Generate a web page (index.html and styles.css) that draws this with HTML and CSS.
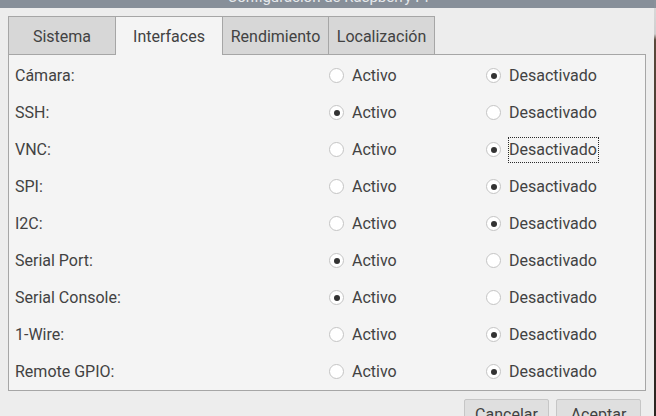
FILE: index.html
```html
<!DOCTYPE html>
<html lang="es">
<head>
<meta charset="utf-8">
<title>Configuración de Raspberry Pi</title>
<link rel="stylesheet" href="styles.css">
</head>
<body>
<div class="screen">
  <div class="window">
    <div class="titlebar"><span class="title-text">Configuración de Raspberry Pi</span></div>
    <div class="content">
      <div class="tabs">
        <div class="tab">Sistema</div>
        <div class="tab active">Interfaces</div>
        <div class="tab">Rendimiento</div>
        <div class="tab last">Localización</div>
      </div>
      <div class="panel">
        <div class="row">
          <span class="label">Cámara:</span>
          <span class="opt"><span class="radio"></span><span class="opt-text">Activo</span></span>
          <span class="opt"><span class="radio on"></span><span class="opt-text">Desactivado</span></span>
        </div>
        <div class="row">
          <span class="label">SSH:</span>
          <span class="opt"><span class="radio on"></span><span class="opt-text">Activo</span></span>
          <span class="opt"><span class="radio"></span><span class="opt-text">Desactivado</span></span>
        </div>
        <div class="row">
          <span class="label">VNC:</span>
          <span class="opt"><span class="radio"></span><span class="opt-text">Activo</span></span>
          <span class="opt"><span class="radio on"></span><span class="opt-text focus">Desactivado</span></span>
        </div>
        <div class="row">
          <span class="label">SPI:</span>
          <span class="opt"><span class="radio"></span><span class="opt-text">Activo</span></span>
          <span class="opt"><span class="radio on"></span><span class="opt-text">Desactivado</span></span>
        </div>
        <div class="row">
          <span class="label">I2C:</span>
          <span class="opt"><span class="radio"></span><span class="opt-text">Activo</span></span>
          <span class="opt"><span class="radio on"></span><span class="opt-text">Desactivado</span></span>
        </div>
        <div class="row">
          <span class="label">Serial Port:</span>
          <span class="opt"><span class="radio on"></span><span class="opt-text">Activo</span></span>
          <span class="opt"><span class="radio"></span><span class="opt-text">Desactivado</span></span>
        </div>
        <div class="row">
          <span class="label">Serial Console:</span>
          <span class="opt"><span class="radio on"></span><span class="opt-text">Activo</span></span>
          <span class="opt"><span class="radio"></span><span class="opt-text">Desactivado</span></span>
        </div>
        <div class="row">
          <span class="label">1-Wire:</span>
          <span class="opt"><span class="radio"></span><span class="opt-text">Activo</span></span>
          <span class="opt"><span class="radio on"></span><span class="opt-text">Desactivado</span></span>
        </div>
        <div class="row">
          <span class="label">Remote GPIO:</span>
          <span class="opt"><span class="radio"></span><span class="opt-text">Activo</span></span>
          <span class="opt"><span class="radio on"></span><span class="opt-text">Desactivado</span></span>
        </div>
      </div>
      <div class="buttons">
        <div class="btn">Cancelar</div>
        <div class="btn">Aceptar</div>
      </div>
    </div>
  </div>
  <div class="desk-edge"></div>
</div>
</body>
</html>
```
FILE: styles.css
```css
html, body {
  margin: 0;
  padding: 0;
}
body {
  width: 656px;
  height: 416px;
  overflow: hidden;
  font-family: Roboto, "Liberation Sans", sans-serif;
  font-size: 16px;
  color: #424242;
  background: #ededed;
}
.screen {
  display: flex;
  width: 656px;
  height: 416px;
}
.window {
  width: 654px;
  height: 416px;
  background: #ededed;
  overflow: hidden;
}
.desk-edge {
  width: 2px;
  height: 416px;
  background: linear-gradient(to bottom, #8a929b 0, #8a929b 8px, #d8d8d8 8px, #cfcfcf 34px, #5a4a3c 40px, #3a3028 200px, #2c2622 416px);
}
.titlebar {
  height: 8px;
  background: #878f99;
  overflow: hidden;
  text-align: center;
  padding-left: 2px;
}
.title-text {
  display: inline-block;
  color: #e6e9ec;
  font-size: 15px;
  line-height: 15px;
  margin-top: -10px;
  vertical-align: top;
}
.content {
  padding: 8px 0 0 8px;
}
.tabs {
  display: flex;
  height: 38px;
  align-items: flex-start;
}
.tab {
  box-sizing: border-box;
  height: 38px;
  width: 107px;
  background: #d7d7d7;
  border-top: 1px solid #a6a6a6;
  border-left: 1px solid #a6a6a6;
  display: flex;
  align-items: center;
  justify-content: center;
  padding-top: 2px;
  position: relative;
  z-index: 1;
}
.tab.active {
  background: #f4f4f4;
  height: 39px;
  padding-bottom: 1px;
}
.tab:nth-child(3) {
  width: 106px;
}
.tab.last {
  width: 107px;
  border-right: 1px solid #a6a6a6;
}
.panel {
  box-sizing: border-box;
  width: 638px;
  height: 337px;
  background: #f4f4f4;
  border: 1px solid #a6a6a6;
  padding: 2px 0 0 6px;
}
.row {
  display: grid;
  grid-template-columns: 314px 157px 1fr;
  height: 37px;
  align-items: center;
}
.label {
  white-space: nowrap;
}
.opt {
  display: flex;
  align-items: center;
  gap: 7px;
}
.radio {
  box-sizing: border-box;
  width: 15px;
  height: 15px;
  border-radius: 50%;
  border: 1px solid #c4c4c4;
  background: #ffffff;
  display: flex;
  align-items: center;
  justify-content: center;
  flex: none;
}
.radio.on::after {
  content: "";
  width: 6px;
  height: 6px;
  border-radius: 50%;
  background: #333333;
}
.opt-text {
  border: 1px dotted transparent;
  padding: 3px 1px 3px 0;
  line-height: 18px;
}
.opt-text.focus {
  border-color: #2a2a2a;
}
.buttons {
  display: flex;
  justify-content: flex-end;
  gap: 7px;
  width: 633px;
  margin-top: 8px;
}
.btn {
  box-sizing: border-box;
  width: 85px;
  height: 32px;
  background: #dfdfdf;
  border: 1px solid #c6c6c6;
  border-radius: 2px;
  text-align: center;
  padding-top: 6px;
  line-height: 18px;
}
```
